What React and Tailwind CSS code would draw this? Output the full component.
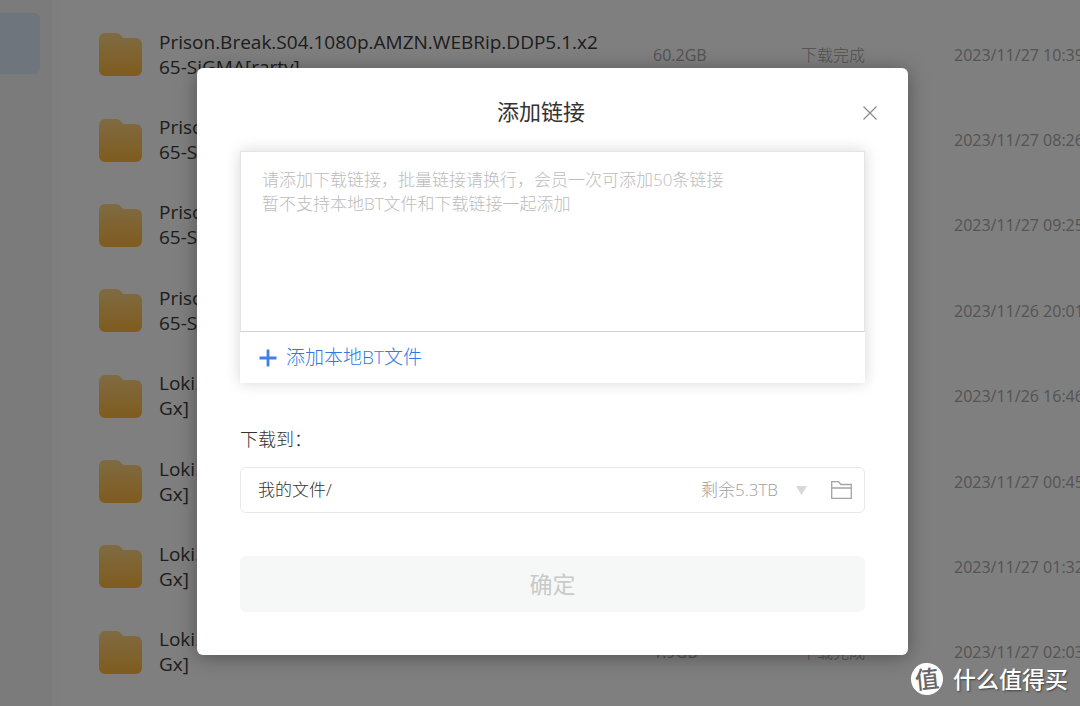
import React from "react";

const FILES = [
  { lines: ["Prison.Break.S04.1080p.AMZN.WEBRip.DDP5.1.x2", "65-SiGMA[rartv]"], size: "60.2GB", date: "2023/11/27 10:39" },
  { lines: ["Prison.Break.S03.1080p.AMZN.WEBRip.DDP5.1.x2", "65-SiGMA[rartv]"], size: "32.8GB", date: "2023/11/27 08:26" },
  { lines: ["Prison.Break.S02.1080p.AMZN.WEBRip.DDP5.1.x2", "65-SiGMA[rartv]"], size: "55.4GB", date: "2023/11/27 09:25" },
  { lines: ["Prison.Break.S01.1080p.AMZN.WEBRip.DDP5.1.x2", "65-SiGMA[rartv]"], size: "54.1GB", date: "2023/11/26 20:01" },
  { lines: ["Loki.S02E04.1080p.WEB.H264-SuccessfulCrab[T", "Gx]"], size: "1.9GB", date: "2023/11/26 16:46" },
  { lines: ["Loki.S02E03.1080p.WEB.H264-SuccessfulCrab[T", "Gx]"], size: "1.9GB", date: "2023/11/27 00:45" },
  { lines: ["Loki.S02E02.1080p.WEB.H264-SuccessfulCrab[T", "Gx]"], size: "1.9GB", date: "2023/11/27 01:32" },
  { lines: ["Loki.S02E01.1080p.WEB.H264-SuccessfulCrab[T", "Gx]"], size: "1.9GB", date: "2023/11/27 02:03" },
];

function FolderIcon() {
  return (
    <svg width="43" height="43" viewBox="0 0 43 43" aria-hidden="true">
      <defs>
        <linearGradient id="folder" x1="0" y1="0" x2="0" y2="1">
          <stop offset="0" stopColor="#ffd685" />
          <stop offset="1" stopColor="#ffb83c" />
        </linearGradient>
      </defs>
      <path
        fill="url(#folder)"
        d="M6 0h11.500c1.600 0 3 .7 4 2l1 1.200c.9 1.100 2.200 1.800 3.700 1.800H37a6 6 0 0 1 6 6v26a6 6 0 0 1-6 6H6a6 6 0 0 1-6-6V6a6 6 0 0 1 6-6z"
      />
    </svg>
  );
}

function FileTable() {
  return (
    <table className="h-[683px] w-full min-w-[1080px] table-fixed border-collapse">
      <colgroup>
        <col className="w-[99px]" />
        <col className="w-[494px]" />
        <col className="w-[148px]" />
        <col className="w-[153px]" />
        <col />
      </colgroup>
      <tbody>
        {FILES.map((file) => (
          <tr key={file.date}>
            <td className="pl-[39px]">
              <FolderIcon />
            </td>
            <td className="whitespace-nowrap text-[19px] leading-[25px] text-[#3a3a3a]">
              {file.lines[0]}
              <br />
              {file.lines[1]}
            </td>
            <td className="text-base text-[#a8a8a8]">{file.size}</td>
            <td className="text-base font-light text-[#a0a0a0]">下载完成</td>
            <td className="whitespace-nowrap text-base text-[#a8a8a8]">{file.date}</td>
          </tr>
        ))}
      </tbody>
    </table>
  );
}

function AddLinkDialog() {
  return (
    <section
      role="dialog"
      aria-labelledby="dialog-title"
      className="w-[711px] max-w-full rounded-md bg-white pb-[43px] shadow-[0_2px_20px_rgba(0,0,0,0.35)]"
    >
      <header className="flex items-start pb-[21px] pl-[43px] pr-[31px] pt-[27px]">
        <h2 id="dialog-title" className="flex-1 text-center text-[22px] leading-8 text-[#333]">
          添加链接
        </h2>
        <button type="button" aria-label="关闭" className="flex size-[35px] items-center justify-end">
          <svg width="14" height="14" viewBox="0 0 14 14" fill="none" stroke="#8a8a8a" strokeWidth="1.200">
            <path d="M.5.5l13 13M13.500.5l-13 13" />
          </svg>
        </button>
      </header>

      <form className="px-[43px]" onSubmit={(e) => e.preventDefault()}>
        <div className="shadow-[0_0_14px_rgba(0,0,0,0.16)]">
          <textarea
            aria-label="下载链接"
            placeholder={"请添加下载链接，批量链接请换行，会员一次可添加50条链接\n暂不支持本地BT文件和下载链接一起添加"}
            className="block h-[181px] w-full resize-none border border-[#e4e4e4] border-b-[#d2d2d2] px-[21px] py-4 text-[17px] font-light leading-6 outline-none placeholder:text-[#bcbcbc]"
          />
          <button
            type="button"
            className="flex h-[51px] w-full items-center gap-[9px] pl-[19px] text-[19px] font-light text-[#3577e0]"
          >
            <svg width="18" height="18" viewBox="0 0 18 18" fill="none" stroke="#3f7fea" strokeWidth="2.800">
              <path d="M9 .5v17M.5 9h17" />
            </svg>
            添加本地BT文件
          </button>
        </div>

        <label htmlFor="target" className="mt-[42px] block text-[18px] font-light leading-7 text-[#333]">
          下载到：
        </label>
        <div className="mt-[14px] flex h-[46px] items-center rounded-md border border-[#e8e8e8] pl-[17px] pr-3 text-[17px] font-light">
          <input
            id="target"
            type="text"
            defaultValue="我的文件/"
            className="min-w-0 flex-1 text-[#333] outline-none"
          />
          <span className="text-[#a0a0a0]">剩余5.3TB</span>
          <button type="button" aria-label="展开" className="ml-[18px]">
            <svg width="11" height="9" viewBox="0 0 11 9" fill="#d8d8d8">
              <path d="M0 0h11L5.500 9z" />
            </svg>
          </button>
          <button type="button" aria-label="选择文件夹" className="ml-6">
            <svg width="21" height="18" viewBox="0 0 21 18" fill="none" stroke="#a4a4a4" strokeWidth="1.300">
              <path d="M.7 17.300V.7h6.800l2.300 2.800h10.500v13.800zM.7 7h19.600" />
            </svg>
          </button>
        </div>

        <button
          type="submit"
          disabled
          className="mt-[43px] block h-14 w-full rounded-md bg-[#f6f8f8] text-[23px] text-[#c8caca]"
        >
          确定
        </button>
      </form>
    </section>
  );
}

export default function App() {
  return (
    <div className="relative flex h-screen overflow-hidden bg-white font-['Open_Sans','Noto_Sans_CJK_SC',sans-serif]">
      <aside className="w-[60px] shrink-0 border-r-8 border-[#fcfcfc] bg-[#f6f6f9] pt-[13px]">
        <div className="h-[61px] w-10 rounded-r-md bg-[#dfebfb]" />
      </aside>
      <main className="min-w-0 flex-1 overflow-hidden pt-3">
        <FileTable />
      </main>

      <div className="absolute inset-0 flex items-center justify-center bg-black/50 pl-[25px] pt-[17px]">
        <AddLinkDialog />
      </div>

      <div className="absolute bottom-[11px] right-3 flex items-center gap-[10px] text-[23px] font-medium leading-8 text-white [text-shadow:1px_1px_2px_rgba(0,0,0,0.5)]">
        <span className="flex size-8 -rotate-6 items-center justify-center rounded-full bg-white text-[24px] text-[#666] [text-shadow:none]">
          值
        </span>
        <span>什么值得买</span>
      </div>
    </div>
  );
}
